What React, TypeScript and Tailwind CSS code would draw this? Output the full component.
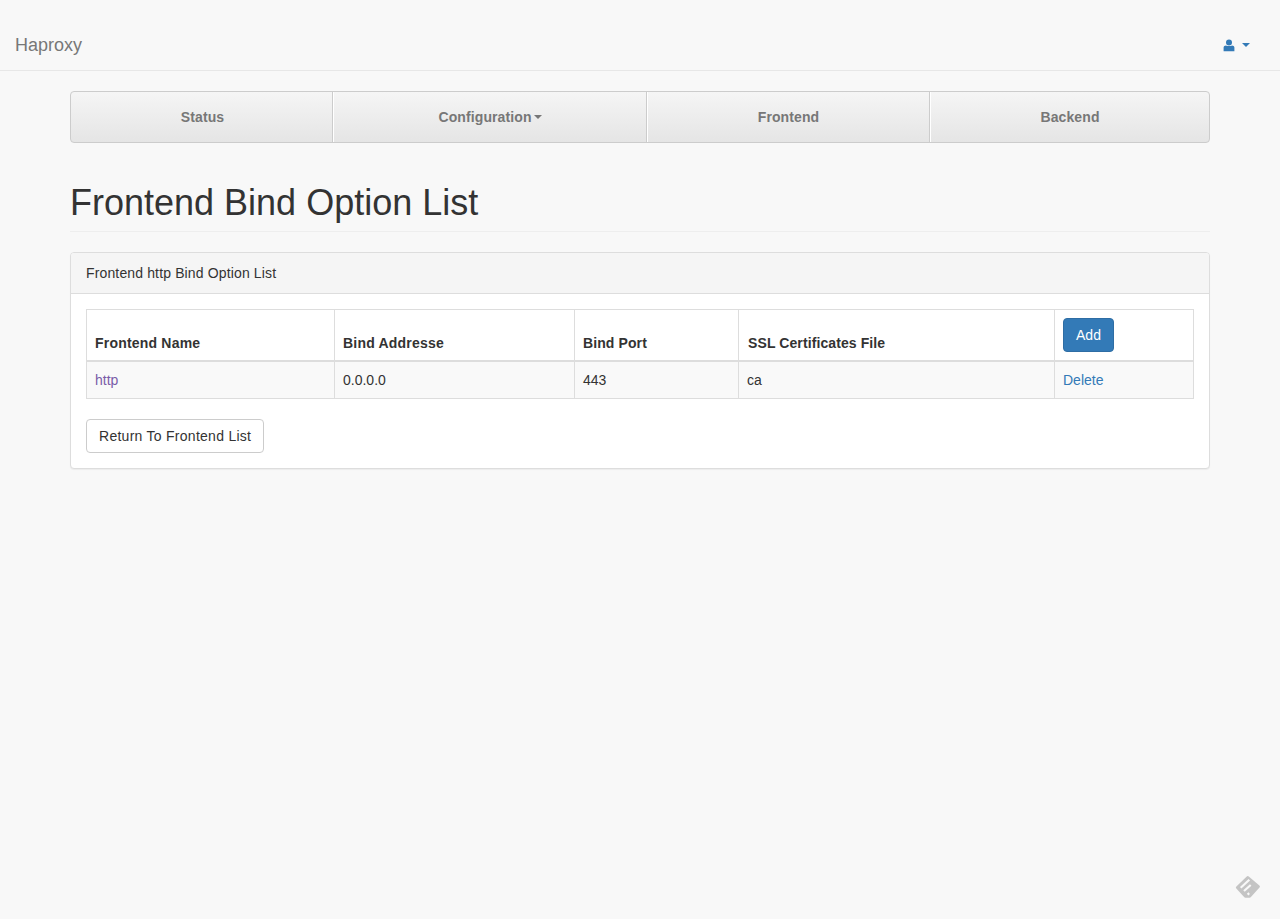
import React from "react";

function User() {
  return (
    <svg width="12" height="13" viewBox="0 0 12 13" className="block" fill="#337ab7">
      <circle cx="6" cy="3.6" r="3" />
      <path d="M0.6 12.2V8.6C0.6 7.2 1.8 6.4 3 6.4C4 7.2 8 7.2 9 6.4C10.2 6.4 11.4 7.2 11.4 8.6V12.2Z" />
    </svg>
  );
}

function Feedly() {
  return (
    <svg width="26" height="26" viewBox="0 0 26 26" className="block">
      <path d="M12.8 2.6L23.4 11.6L14.6 21.2H10.4L2.4 12.6Z" fill="#c4c4c4" stroke="#c4c4c4" strokeWidth="3" strokeLinejoin="round" />
      <path d="M5.7 12.7L14.3 4.7M9 16L15.7 10M12.6 19.6L14.2 18.2" fill="none" stroke="#f8f8f8" strokeWidth="2.2" />
    </svg>
  );
}

const navItem =
  "flex items-center justify-center h-full text-[14px] font-bold text-[#777777] tracking-[0.1px] border-r border-r-[#cccccc] shadow-[1px_0_0_#ffffff]";
const th = "border border-[#dddddd] border-b-2 px-[8px] pb-[7px] align-bottom text-left font-bold";
const td = "border border-[#dddddd] px-[8px]";

export default function App() {
  return (
    <div className="min-h-[919px] relative bg-[#f8f8f8] text-[14px] leading-[20px] text-[#333333] font-['Liberation_Sans',Arial,sans-serif]">
      <header className="h-[71px] pt-[20px] border-b border-b-[#e7e7e7] flex items-center justify-between pl-[15px] pr-[30px]">
        <a className="text-[18px] text-[#777777]">Haproxy</a>
        <a className="flex items-center gap-[7px] text-[#337ab7]">
          <User />
          <span className="w-0 h-0 border-x-[4px] border-x-transparent border-t-[4px] border-t-[#337ab7]" />
        </a>
      </header>

      <div className="mx-[70px] pt-[20px]">
        <nav className="h-[52px] flex rounded-[4px] border border-[#cccccc] bg-gradient-to-b from-[#f5f5f5] to-[#e5e5e5] overflow-hidden">
          <a className={`${navItem} w-[262px] pl-[2px]`}>Status</a>
          <a className={`${navItem} w-[313px] ml-px`}>
            Configuration
            <span className="ml-[2px] w-0 h-0 border-x-[4px] border-x-transparent border-t-[4px] border-t-[#777777]" />
          </a>
          <a className={`${navItem} w-[282px] ml-px`}>Frontend</a>
          <a className="flex items-center justify-center h-full flex-1 ml-px text-[14px] font-bold tracking-[0.1px] text-[#777777]">Backend</a>
        </nav>

        <div className="mt-[40px] pb-[8px] mb-[20px] border-b border-b-[#eeeeee]">
          <h1 className="text-[36px] leading-[40px] font-normal">Frontend Bind Option List</h1>
        </div>

        <section className="bg-white border border-[#dddddd] rounded-[4px] shadow-[0_1px_1px_rgba(0,0,0,0.05)]">
          <div className="h-[41px] px-[15px] flex items-center bg-[#f5f5f5] border-b border-b-[#dddddd] rounded-t-[3px] tracking-[0.14px]">
            Frontend http Bind Option List
          </div>
          <div className="p-[15px]">
            <table className="w-[1108px] table-fixed border-collapse mb-[20px]">
              <colgroup>
                <col className="w-[248px]" />
                <col className="w-[240px]" />
                <col className="w-[164px]" />
                <col className="w-[316px]" />
                <col className="w-[139px]" />
              </colgroup>
              <thead>
                <tr className="h-[51px]">
                  <th className={`${th} tracking-[0.2px]`}>Frontend Name</th>
                  <th className={`${th} tracking-[0.2px]`}>Bind Addresse</th>
                  <th className={`${th} tracking-[0.1px]`}>Bind Port</th>
                  <th className={`${th} pl-[9px] tracking-[0.1px]`}>SSL Certificates File</th>
                  <th className="border border-[#dddddd] border-b-2 px-[8px] pt-[8px] pb-[8px] align-bottom text-left font-bold">
                    <button className="block h-[34px] w-[51px] rounded-[4px] bg-[#337ab7] border border-[#2e6da4] text-white font-normal text-[14px]">Add</button>
                  </th>
                </tr>
              </thead>
              <tbody>
                <tr className="h-[37px] bg-[#f9f9f9]">
                  <td className={`${td} text-[#7a5ca8]`}>http</td>
                  <td className={td}>0.0.0.0</td>
                  <td className={td}>443</td>
                  <td className={td}>ca</td>
                  <td className={`${td} text-[#337ab7]`}>Delete</td>
                </tr>
              </tbody>
            </table>
            <button className="block h-[34px] px-[12px] rounded-[4px] bg-white border border-[#cccccc] text-[#333333] text-[14px] tracking-[0.27px]">Return To Frontend List</button>
          </div>
        </section>
      </div>

      <div className="absolute left-[1235px] top-[875px]">
        <Feedly />
      </div>
    </div>
  );
}
